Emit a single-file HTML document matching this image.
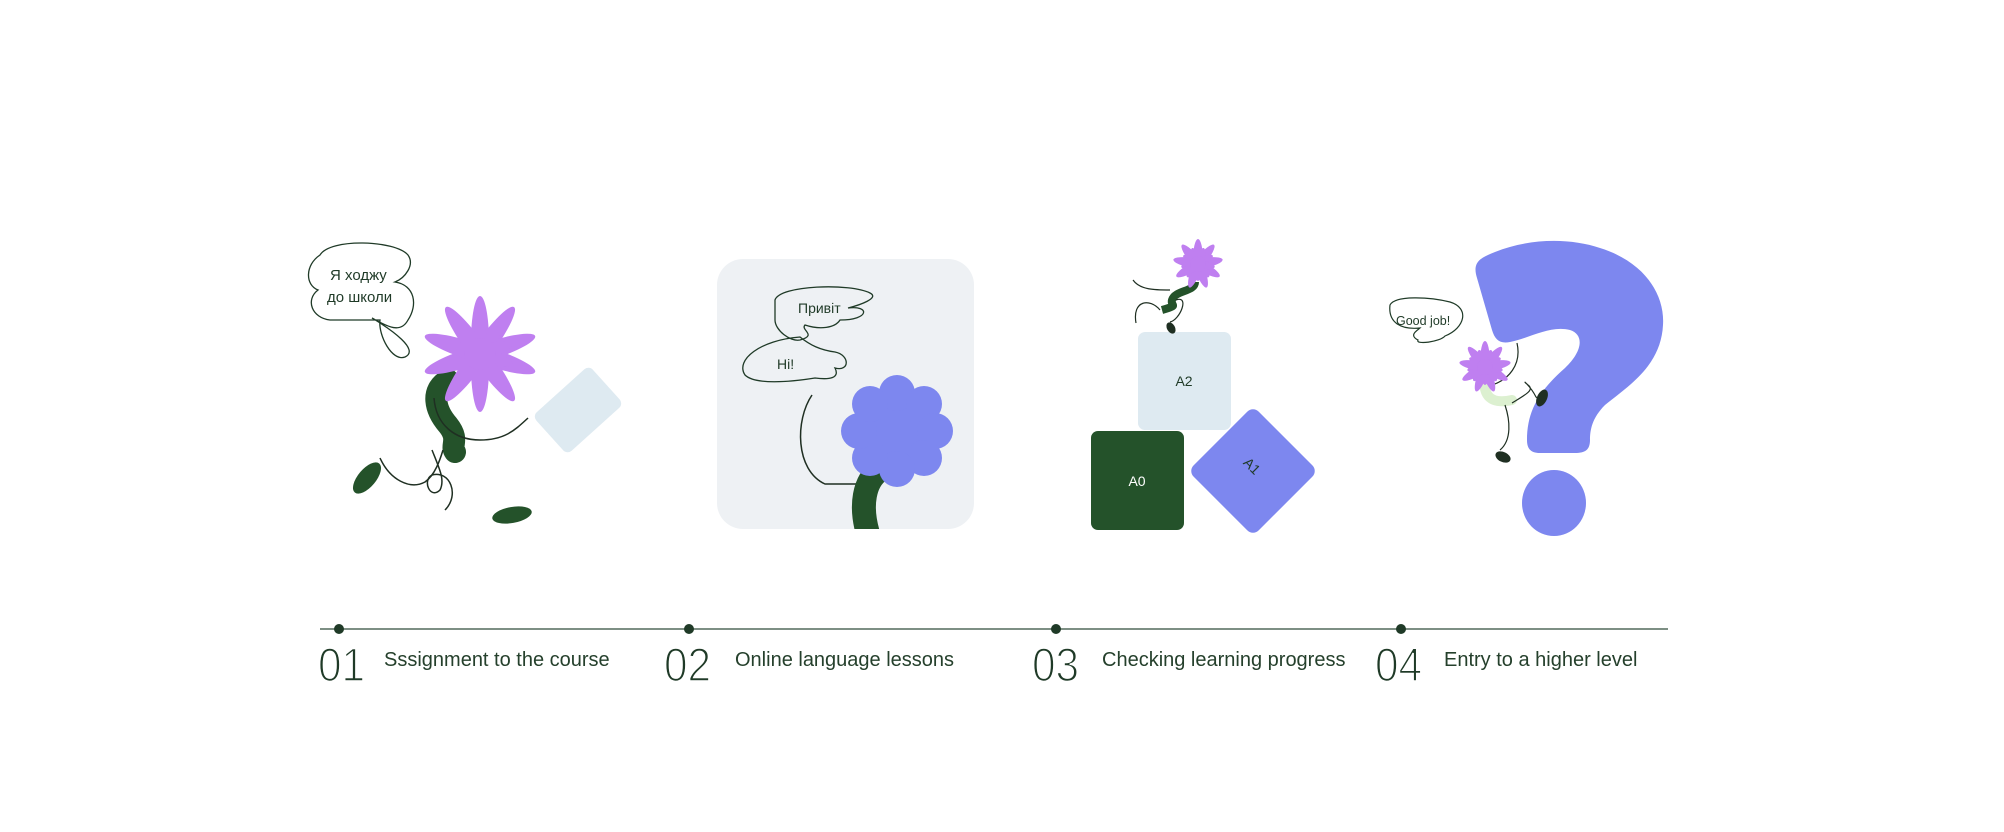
<!DOCTYPE html>
<html><head><meta charset="utf-8"><style>
html,body{margin:0;padding:0;background:#fff;}
body{width:2004px;height:832px;position:relative;overflow:hidden;font-family:"Liberation Sans","Noto Sans CJK SC",sans-serif;}
svg{position:absolute;left:0;top:0;}
.num{position:absolute;top:640px;font-size:47px;font-weight:400;color:#1f3a27;letter-spacing:0px;line-height:50px;transform:scaleX(0.9);transform-origin:left;-webkit-text-stroke:1.6px #fff;paint-order:normal;}
.lbl{position:absolute;top:649px;font-size:20px;color:#25402c;line-height:22px;}
</style></head><body>
<svg width="2004" height="832" viewBox="0 0 2004 832">
<defs><clipPath id="cp2"><rect x="717" y="259" width="257" height="270" rx="26"/></clipPath></defs>
<line x1="320" y1="629" x2="1668" y2="629" stroke="#7d8f84" stroke-width="2"/>
<circle cx="339" cy="629" r="5" fill="#1f3a27"/>
<circle cx="689" cy="629" r="5" fill="#1f3a27"/>
<circle cx="1056" cy="629" r="5" fill="#1f3a27"/>
<circle cx="1401" cy="629" r="5" fill="#1f3a27"/>

<!-- panel 1 -->
<path d="M320,255 C330,238 395,240 408,255 C415,265 405,278 395,282 C415,285 418,305 408,320 C400,335 385,325 372,318 C392,330 420,350 405,357 C392,362 378,335 380,320 L330,320 C312,318 305,300 318,290 C305,285 305,265 320,255 Z" fill="none" stroke="#1f3a27" stroke-width="1.3"/>
<text x="330" y="280" font-size="15" fill="#1f3a27">Я ходжу</text>
<text x="327" y="302" font-size="15" fill="#1f3a27">до школи</text>
<g transform="translate(578,410) rotate(48)"><rect x="-26" y="-38" width="52" height="76" rx="6" fill="#deeaf1"/></g>
<path d="M448,380 C430,390 435,410 448,425 C460,440 450,445 455,452" stroke="#24522a" stroke-width="22" fill="none" stroke-linecap="round"/>
<g fill="#bf7ff0" transform="translate(480,354)">
<ellipse rx="9" ry="46" transform="rotate(0) translate(0,-12)"/>
<ellipse rx="9" ry="46" transform="rotate(36) translate(0,-12)"/>
<ellipse rx="9" ry="46" transform="rotate(72) translate(0,-12)"/>
<ellipse rx="9" ry="46" transform="rotate(108) translate(0,-12)"/>
<ellipse rx="9" ry="46" transform="rotate(144) translate(0,-12)"/>
<ellipse rx="9" ry="46" transform="rotate(180) translate(0,-12)"/>
<ellipse rx="9" ry="46" transform="rotate(216) translate(0,-12)"/>
<ellipse rx="9" ry="46" transform="rotate(252) translate(0,-12)"/>
<ellipse rx="9" ry="46" transform="rotate(288) translate(0,-12)"/>
<ellipse rx="9" ry="46" transform="rotate(324) translate(0,-12)"/>
<circle r="16"/>
</g>
<path d="M434,398 C436,425 455,440 480,440 C505,440 515,430 528,418" fill="none" stroke="#1f2f22" stroke-width="1.5"/>
<path d="M380,458 C390,480 410,490 425,482 C435,475 440,460 443,450" fill="none" stroke="#1f2f22" stroke-width="1.5"/>
<path d="M432,450 C440,470 445,480 440,490 C430,500 422,480 432,475 C450,470 460,495 445,510" fill="none" stroke="#1f2f22" stroke-width="1.5"/>
<ellipse cx="367" cy="478" rx="9" ry="19" transform="rotate(40 367 478)" fill="#24522a"/>
<ellipse cx="512" cy="515" rx="20" ry="8" transform="rotate(-10 512 515)" fill="#24522a"/>

<!-- panel 2 -->
<rect x="717" y="259" width="257" height="270" rx="26" fill="#eef1f4"/>
<path d="M775,300 C780,285 850,283 870,293 C880,298 860,305 848,308 C870,305 870,320 840,320 C835,328 820,330 805,325 C800,330 818,335 800,340 C790,342 775,330 775,320 Z" fill="none" stroke="#1f3a27" stroke-width="1.3"/>
<text x="798" y="313" font-size="14" fill="#1f3a27">Привіт</text>
<path d="M800,337 C760,340 735,360 745,375 C755,385 790,382 815,378 C830,380 840,378 835,368 C850,372 850,355 835,352 C820,350 810,345 800,337 Z" fill="none" stroke="#1f3a27" stroke-width="1.3"/>
<text x="777" y="369" font-size="14" fill="#1f3a27">Hi!</text>
<path d="M812,395 C795,420 795,470 825,484 L860,484" fill="none" stroke="#1f2f22" stroke-width="1.5"/>
<g clip-path="url(#cp2)"><path d="M870,540 C858,505 865,480 880,470" stroke="#24522a" stroke-width="24" fill="none"/></g>
<g fill="#7d87ef" transform="translate(897,431)">
<circle r="36"/>
<circle cx="0" cy="-38" r="18"/><circle cx="27" cy="-27" r="18"/><circle cx="38" cy="0" r="18"/><circle cx="27" cy="27" r="18"/>
<circle cx="0" cy="38" r="18"/><circle cx="-27" cy="27" r="18"/><circle cx="-38" cy="0" r="18"/><circle cx="-27" cy="-27" r="18"/>
</g>

<!-- panel 3 -->
<rect x="1138" y="332" width="93" height="98" rx="7" fill="#deeaf1"/>
<text x="1184" y="386" font-size="14" fill="#1f3a27" text-anchor="middle">A2</text>
<rect x="1091" y="431" width="93" height="99" rx="7" fill="#24522a"/>
<text x="1137" y="486" font-size="14" fill="#fff" text-anchor="middle">A0</text>
<g transform="translate(1253,471) rotate(45)"><rect x="-46" y="-46" width="92" height="92" rx="8" fill="#7d87ef"/></g>
<text x="1250" y="470" font-size="14" fill="#1f3a27" text-anchor="middle" transform="rotate(45 1250 468)">A1</text>
<path d="M1195,282 C1195,292 1175,290 1172,300 C1170,306 1180,305 1162,310" stroke="#24522a" stroke-width="8" fill="none"/>
<path d="M1136,323 C1132,300 1150,298 1160,310 M1176,300 C1190,295 1180,320 1170,322" fill="none" stroke="#1f2f22" stroke-width="1.2"/>
<path d="M1133,280 C1140,290 1155,290 1170,290" fill="none" stroke="#1f2f22" stroke-width="1.2"/>
<ellipse cx="1171" cy="328" rx="4" ry="6" transform="rotate(-30 1171 328)" fill="#1f2f22"/>
<g fill="#bf7ff0" transform="translate(1198,264)">
<ellipse rx="5" ry="21" transform="rotate(0) translate(0,-4)"/>
<ellipse rx="5" ry="21" transform="rotate(40) translate(0,-4)"/>
<ellipse rx="5" ry="21" transform="rotate(80) translate(0,-4)"/>
<ellipse rx="5" ry="21" transform="rotate(120) translate(0,-4)"/>
<ellipse rx="5" ry="21" transform="rotate(160) translate(0,-4)"/>
<ellipse rx="5" ry="21" transform="rotate(200) translate(0,-4)"/>
<ellipse rx="5" ry="21" transform="rotate(240) translate(0,-4)"/>
<ellipse rx="5" ry="21" transform="rotate(280) translate(0,-4)"/>
<ellipse rx="5" ry="21" transform="rotate(320) translate(0,-4)"/>
<circle r="8"/>
</g>

<!-- panel 4 -->
<path d="M1477,278 C1472,262 1480,258 1495,252 C1530,238 1570,238 1600,248 C1645,262 1665,295 1663,325 C1661,365 1630,385 1605,405 C1592,418 1590,430 1590,440 C1590,450 1585,453 1575,453 L1540,453 C1530,453 1527,448 1527,440 C1527,410 1540,390 1565,368 C1582,352 1585,335 1570,330 C1550,325 1530,338 1510,342 C1500,344 1495,340 1492,330 Z" fill="#7d87ef"/>
<ellipse cx="1554" cy="503" rx="32" ry="33" fill="#7d87ef"/>
<path d="M1390,305 C1395,295 1430,297 1450,302 C1470,308 1465,328 1445,336 C1440,342 1415,345 1418,340 C1408,335 1418,330 1420,328 C1400,330 1388,322 1390,305 Z" fill="none" stroke="#1f3a27" stroke-width="1.2"/>
<text x="1396" y="325" font-size="12.5" fill="#1f3a27">Good job!</text>
<path d="M1485,375 C1482,395 1490,405 1512,400" stroke="#dcf0d0" stroke-width="10" fill="none" stroke-linecap="round"/>
<path d="M1517,343 C1522,365 1508,380 1492,385" fill="none" stroke="#1f2f22" stroke-width="1.2"/>
<path d="M1512,403 C1525,395 1535,390 1528,385 C1520,378 1530,385 1536,397 L1540,400" fill="none" stroke="#1f2f22" stroke-width="1.2"/>
<path d="M1505,405 C1510,420 1512,440 1500,450" fill="none" stroke="#1f2f22" stroke-width="1.2"/>
<ellipse cx="1542" cy="398" rx="5" ry="9" transform="rotate(25 1542 398)" fill="#1f2f22"/>
<ellipse cx="1503" cy="457" rx="8" ry="5" transform="rotate(25 1503 457)" fill="#1f2f22"/>
<g fill="#bf7ff0" transform="translate(1485,367)">
<ellipse rx="5" ry="22" transform="rotate(0) translate(0,-4)"/>
<ellipse rx="5" ry="22" transform="rotate(40) translate(0,-4)"/>
<ellipse rx="5" ry="22" transform="rotate(80) translate(0,-4)"/>
<ellipse rx="5" ry="22" transform="rotate(120) translate(0,-4)"/>
<ellipse rx="5" ry="22" transform="rotate(160) translate(0,-4)"/>
<ellipse rx="5" ry="22" transform="rotate(200) translate(0,-4)"/>
<ellipse rx="5" ry="22" transform="rotate(240) translate(0,-4)"/>
<ellipse rx="5" ry="22" transform="rotate(280) translate(0,-4)"/>
<ellipse rx="5" ry="22" transform="rotate(320) translate(0,-4)"/>
<circle r="8"/>
</g>
</svg>

<div class="num" style="left:318px">01</div><div class="lbl" style="left:384px">Sssignment to the course</div>
<div class="num" style="left:664px">02</div><div class="lbl" style="left:735px">Online language lessons</div>
<div class="num" style="left:1032px">03</div><div class="lbl" style="left:1102px">Checking learning progress</div>
<div class="num" style="left:1375px">04</div><div class="lbl" style="left:1444px">Entry to a higher level</div>
</body></html>
